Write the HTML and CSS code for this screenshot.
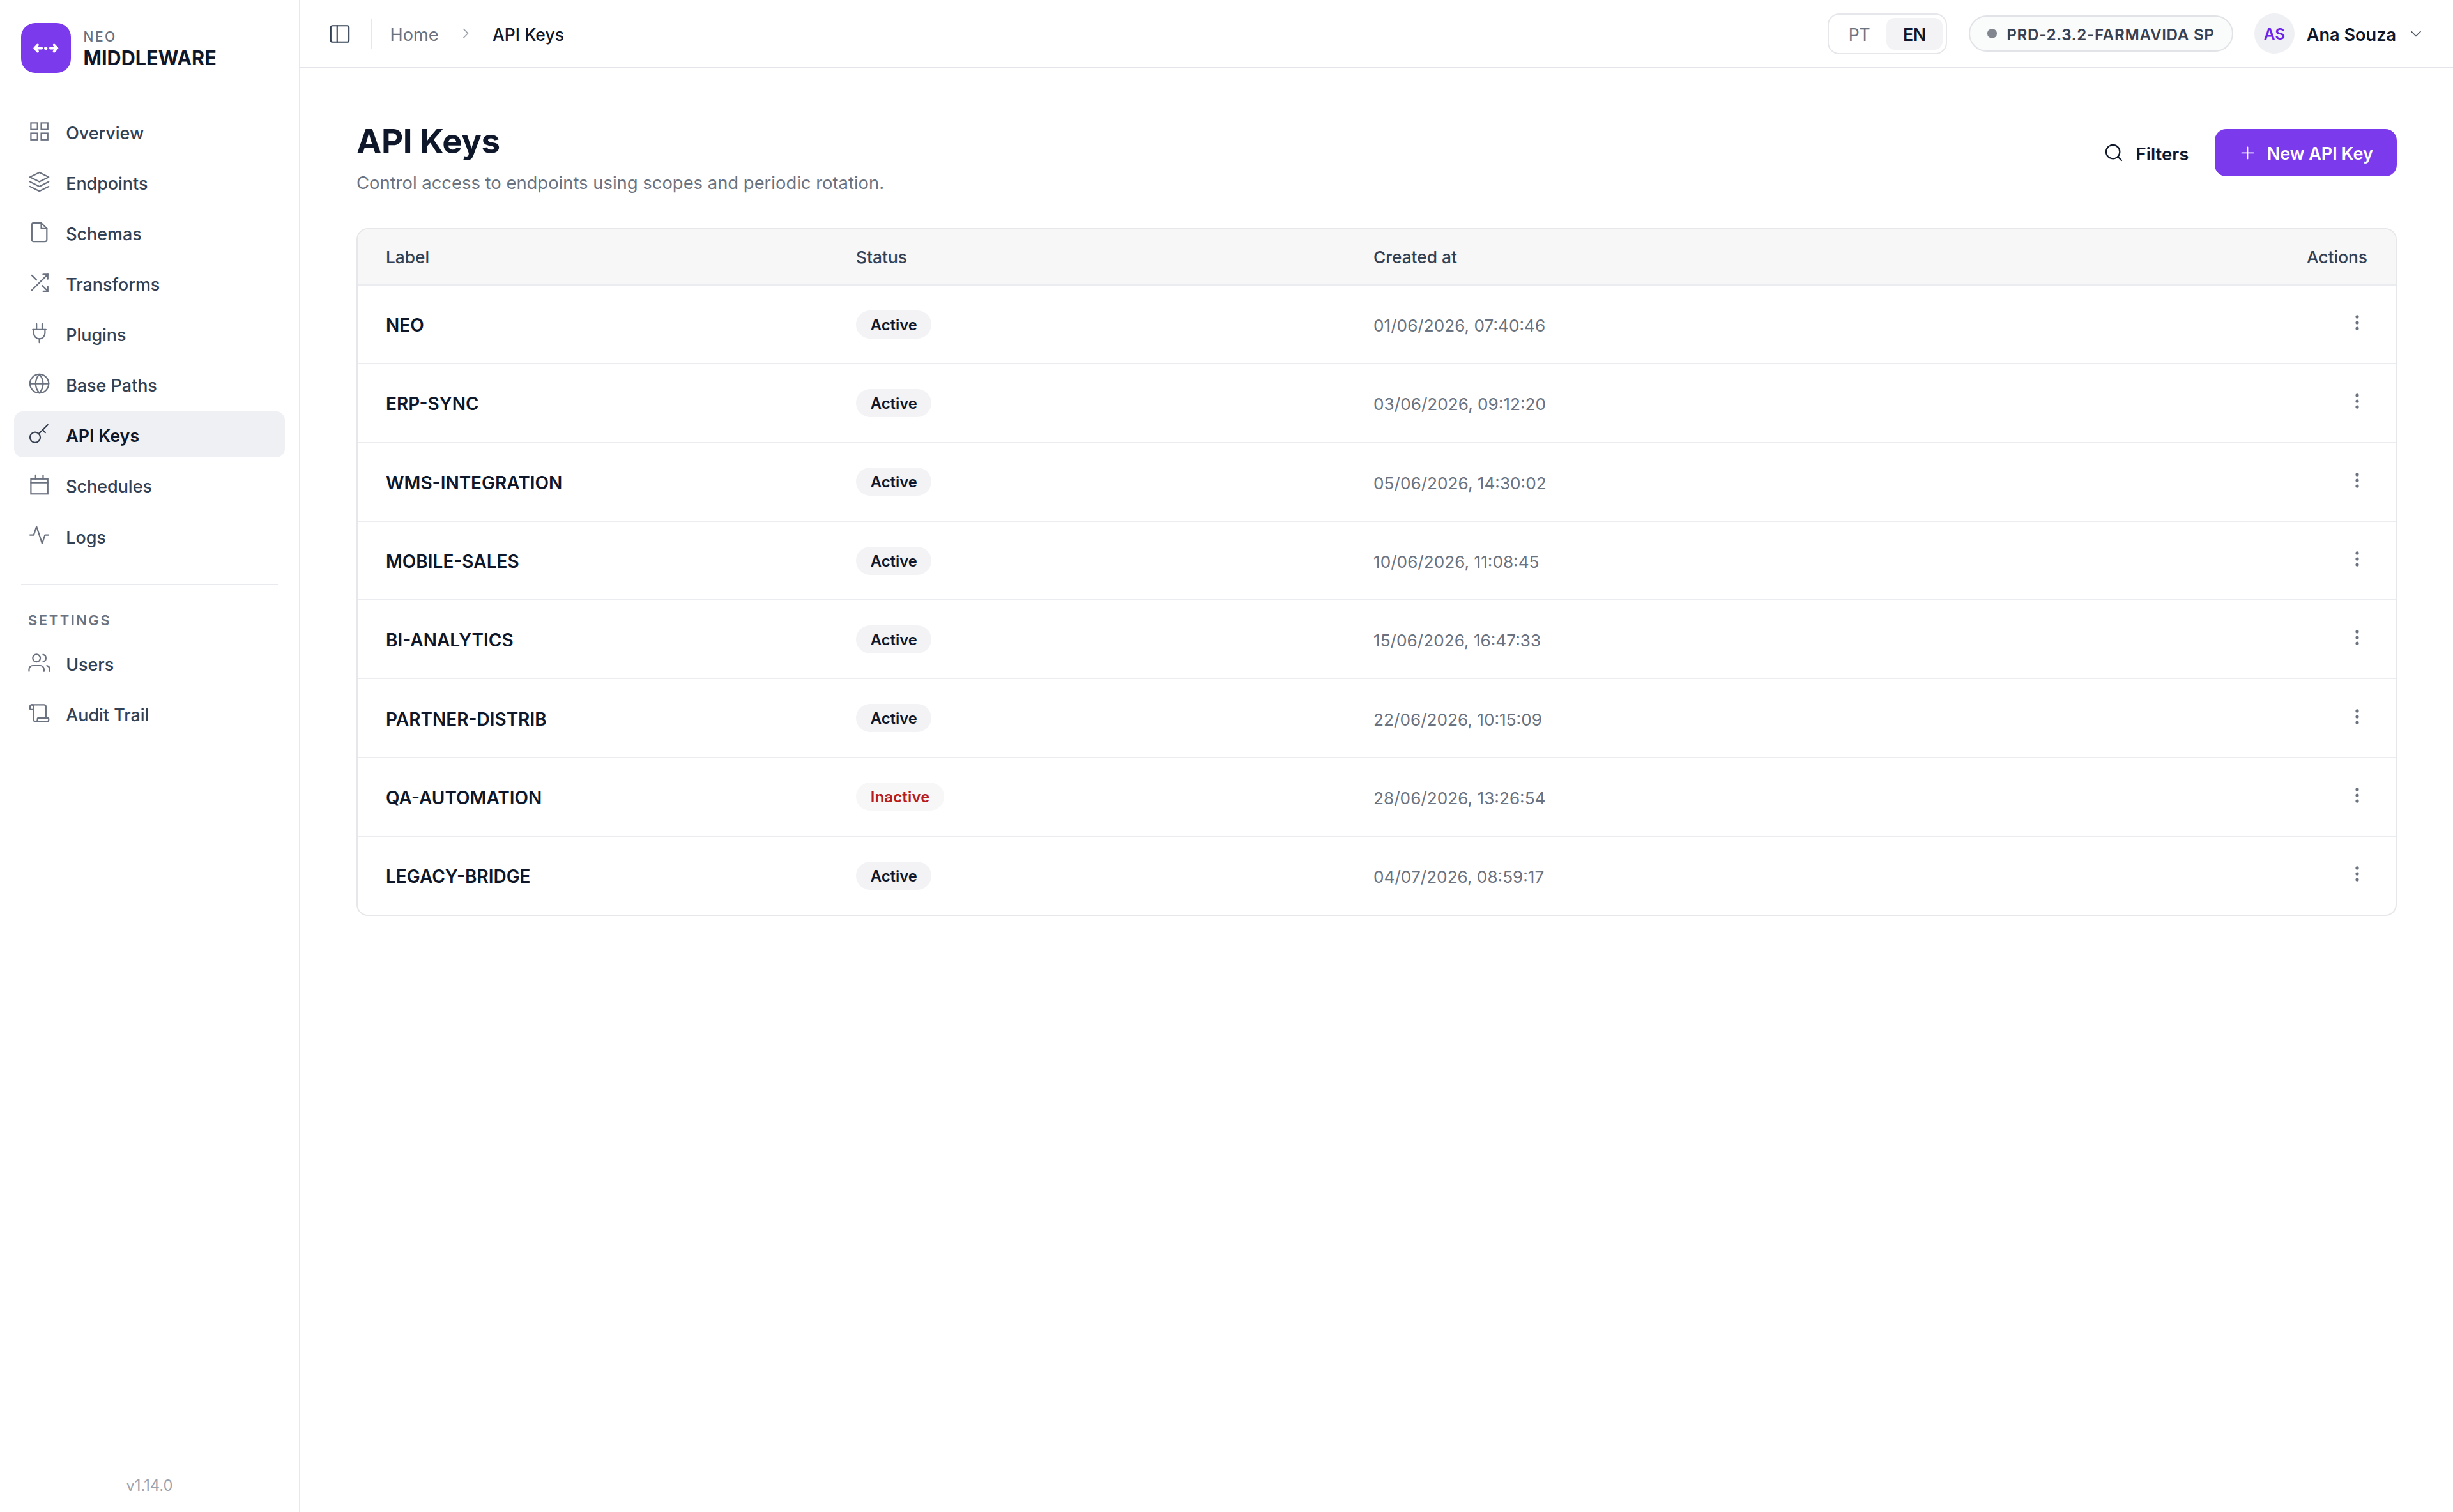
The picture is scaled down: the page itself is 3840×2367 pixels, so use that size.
FILE: index.html
```
<!DOCTYPE html>
<html lang="en">
<head>
    <meta charset="UTF-8">
    <meta name="viewport" content="width=device-width, initial-scale=1.0">
    <title>API Keys - Neo Middleware</title>
    <link rel="stylesheet" href="styles.css">
</head>
<body>
    <!-- Sidebar -->
    <aside class="sidebar">
        <div class="brand">
            <svg class="brand-logo" viewBox="0 0 78 78">
                <path d="M26 34.4l-4.8 5.1 4.8 5.1M21.5 39.5h10.7M45.8 39.5h10.5M51.6 34.4l4.8 5.1-4.8 5.1"/>
                <circle cx="38.7" cy="39.5" r="2.6"/>
            </svg>
            <div class="brand-text">
                <div class="brand-top">NEO</div>
                <div class="brand-name">MIDDLEWARE</div>
            </div>
        </div>

        <nav class="nav">
            <a class="nav-item">
                <svg class="icon sharp" viewBox="0 0 24 24"><rect x="3" y="3" width="7" height="7"/><rect x="14" y="3" width="7" height="7"/><rect x="14" y="14" width="7" height="7"/><rect x="3" y="14" width="7" height="7"/></svg>
                <span>Overview</span>
            </a>
            <a class="nav-item">
                <svg class="icon" viewBox="0 0 24 24"><path d="M12 2L2 7l10 5 10-5-10-5z"/><path d="M2 17l10 5 10-5"/><path d="M2 12l10 5 10-5"/></svg>
                <span>Endpoints</span>
            </a>
            <a class="nav-item">
                <svg class="icon" viewBox="0 0 24 24"><path d="M14 2H6a2 2 0 0 0-2 2v16a2 2 0 0 0 2 2h12a2 2 0 0 0 2-2V8z"/><path d="M14 2v6h6"/></svg>
                <span>Schemas</span>
            </a>
            <a class="nav-item">
                <svg class="icon sharp" viewBox="0 0 24 24"><path d="M16 3h5v5"/><path d="M4 20L21 3"/><path d="M21 16v5h-5"/><path d="M15 15l6 6"/><path d="M4 4l5 5"/></svg>
                <span>Transforms</span>
            </a>
            <a class="nav-item">
                <svg class="icon" viewBox="0 0 24 24"><path d="M9 2v6M15 2v6M12 18v4M5 8h14"/><path d="M6 8v4a6 6 0 0 0 12 0V8"/></svg>
                <span>Plugins</span>
            </a>
            <a class="nav-item">
                <svg class="icon" viewBox="0 0 24 24"><circle cx="12" cy="12" r="10"/><path d="M2 12h20"/><path d="M12 2a15.3 15.3 0 0 1 4 10 15.3 15.3 0 0 1-4 10 15.3 15.3 0 0 1-4-10 15.3 15.3 0 0 1 4-10z"/></svg>
                <span>Base Paths</span>
            </a>
            <a class="nav-item active">
                <svg class="icon" viewBox="0 0 24 24"><circle cx="7.5" cy="15.5" r="5.5"/><path d="M21 2l-9.6 9.6"/><path d="M15.5 7.5l2.8 2.8"/></svg>
                <span>API Keys</span>
            </a>
            <a class="nav-item">
                <svg class="icon sharp" viewBox="0 0 24 24"><rect x="3" y="6" width="18" height="16"/><path d="M3 10h18M8 2v4M16 2v4"/></svg>
                <span>Schedules</span>
            </a>
            <a class="nav-item">
                <svg class="icon" viewBox="0 0 24 24"><path d="M22 12h-4l-3 9L9 3l-3 9H2"/></svg>
                <span>Logs</span>
            </a>
        </nav>

        <div class="separator"></div>
        <div class="nav-title">SETTINGS</div>

        <nav class="nav">
            <a class="nav-item">
                <svg class="icon" viewBox="0 0 24 24"><path d="M17 21v-2a4 4 0 0 0-4-4H5a4 4 0 0 0-4 4v2"/><circle cx="9" cy="7" r="4"/><path d="M23 21v-2a4 4 0 0 0-3-3.87"/><path d="M16 3.13a4 4 0 0 1 0 7.75"/></svg>
                <span>Users</span>
            </a>
            <a class="nav-item">
                <svg class="icon" viewBox="0 0 24 24"><path d="M19 17V5a2 2 0 0 0-2-2H4"/><path d="M8 21h12a2 2 0 0 0 2-2v-1a1 1 0 0 0-1-1H11a1 1 0 0 0-1 1v1a2 2 0 1 1-4 0V5a2 2 0 1 0-4 0v2a1 1 0 0 0 1 1h3"/></svg>
                <span>Audit Trail</span>
            </a>
        </nav>

        <div class="version">v1.14.0</div>
    </aside>

    <div class="content">
        <!-- Top bar -->
        <header class="topbar">
            <svg class="icon panel-icon" viewBox="0 0 24 24"><rect x="2" y="3" width="20" height="18" rx="2"/><path d="M9 3v18"/></svg>
            <div class="topbar-divider"></div>
            <div class="breadcrumb">
                <span class="crumb">Home</span>
                <svg class="icon crumb-icon" viewBox="0 0 24 24"><path d="M9 18l6-6-6-6"/></svg>
                <span class="crumb current">API Keys</span>
            </div>

            <div class="lang">
                <span class="lang-pt">PT</span>
                <span class="lang-en">EN</span>
            </div>
            <div class="env">
                <span class="env-dot"></span>
                <span class="env-name">PRD-2.3.2-FARMAVIDA SP</span>
            </div>
            <div class="user">
                <span class="avatar">AS</span>
                <span class="user-name">Ana Souza</span>
                <svg class="icon user-icon" viewBox="0 0 24 24"><path d="M6 9l6 6 6-6"/></svg>
            </div>
        </header>

        <main>
            <div class="page-head">
                <div>
                    <h1>API Keys</h1>
                    <p>Control access to endpoints using scopes and periodic rotation.</p>
                </div>
                <div class="page-actions">
                    <button class="filters-btn">
                        <svg class="icon" viewBox="0 0 24 24"><circle cx="11" cy="11" r="8"/><path d="M21 21l-4.35-4.35"/></svg>
                        <span>Filters</span>
                    </button>
                    <button class="new-btn">
                        <svg class="icon" viewBox="0 0 24 24"><path d="M12 5v14M5 12h14"/></svg>
                        <span>New API Key</span>
                    </button>
                </div>
            </div>

            <!-- Keys table -->
            <div class="table" id="keys-table">
                <div class="row head">
                    <span>Label</span>
                    <span>Status</span>
                    <span>Created at</span>
                    <span class="right">Actions</span>
                </div>
            </div>
        </main>
    </div>

    <script>
        const keys = [
            { label: 'NEO', active: true, created: '01/06/2026, 07:40:46' },
            { label: 'ERP-SYNC', active: true, created: '03/06/2026, 09:12:20' },
            { label: 'WMS-INTEGRATION', active: true, created: '05/06/2026, 14:30:02' },
            { label: 'MOBILE-SALES', active: true, created: '10/06/2026, 11:08:45' },
            { label: 'BI-ANALYTICS', active: true, created: '15/06/2026, 16:47:33' },
            { label: 'PARTNER-DISTRIB', active: true, created: '22/06/2026, 10:15:09' },
            { label: 'QA-AUTOMATION', active: false, created: '28/06/2026, 13:26:54' },
            { label: 'LEGACY-BRIDGE', active: true, created: '04/07/2026, 08:59:17' }
        ];
        const table = document.getElementById('keys-table');

        keys.forEach(key => {
            const row = document.createElement('div');
            row.classList.add('row');

            row.innerHTML = `
                <span class="label">${key.label}</span>
                <span><span class="badge ${key.active ? '' : 'inactive'}">${key.active ? 'Active' : 'Inactive'}</span></span>
                <span class="date">${key.created}</span>
                <span class="right">
                    <svg class="dots" viewBox="0 0 32 32"><circle cx="16" cy="6.9" r="2.6"/><circle cx="16" cy="16" r="2.6"/><circle cx="16" cy="25.1" r="2.6"/></svg>
                </span>
            `;

            table.appendChild(row);
        });
    </script>
</body>
</html>
```
FILE: styles.css
```
* {
    box-sizing: border-box;
}

body {
    font-family: Inter, sans-serif;
    margin: 0;
    min-height: 100vh;
    display: flex;
    background-color: #fff;
    color: #0f172a;
}

.icon {
    width: 35.2px;
    height: 35.2px;
    flex-shrink: 0;
    fill: none;
    stroke: #6b7280;
    stroke-width: 1.5;
    stroke-linecap: round;
    stroke-linejoin: round;
}

.icon.sharp {
    stroke-linejoin: miter;
}

/* Sidebar */
.sidebar {
    width: 470px;
    flex-shrink: 0;
    padding: 36px 22px 26px;
    border-right: 2px solid #e8e8ec;
    display: flex;
    flex-direction: column;
}

.brand {
    display: flex;
    align-items: center;
    gap: 19.5px;
    margin-left: 11px;
    margin-bottom: 55.3px;
}

.brand-logo {
    width: 78px;
    height: 78px;
    background-color: #7c3aed;
    border-radius: 22px;
    fill: none;
    stroke: #fff;
    stroke-width: 3.8;
    stroke-linecap: round;
    stroke-linejoin: round;
}

.brand-logo circle {
    fill: #fff;
    stroke: none;
}

.brand-text {
    padding-top: 3px;
}

.brand-top {
    font-size: 21px;
    font-weight: 500;
    line-height: 28px;
    letter-spacing: 2.5px;
    color: #6b7280;
}

.brand-name {
    font-size: 30.6px;
    font-weight: 700;
    line-height: 38px;
}

.nav {
    display: flex;
    flex-direction: column;
    gap: 7.1px;
}

.nav-item {
    height: 72px;
    padding: 0 22px;
    display: flex;
    align-items: center;
    gap: 24px;
    border-radius: 14px;
    font-size: 26.9px;
    font-weight: 500;
    color: #334155;
}

.nav-item span {
    padding-top: 5px;
}

.nav-item.active {
    background-color: #eff0f4;
    color: #0f172a;
    font-weight: 600;
}

.nav-item.active .icon {
    stroke: #374151;
}

.separator {
    height: 2px;
    margin: 40.3px 11px 39.7px;
    background-color: #e8eaee;
}

.nav-title {
    font-size: 22px;
    font-weight: 600;
    line-height: 30px;
    letter-spacing: 2.5px;
    color: #6b7280;
    padding-left: 22px;
    margin-bottom: 15.3px;
}

.version {
    margin-top: auto;
    font-size: 23.7px;
    line-height: 30px;
    text-align: center;
    color: #9ca3af;
}

/* Top bar */
.content {
    flex: 1;
}

.topbar {
    height: 107px;
    padding: 0 44.3px 0 45px;
    border-bottom: 2px solid #e4e5ea;
    display: flex;
    align-items: center;
}

.panel-icon {
    width: 34px;
    height: 34px;
    stroke: #334155;
}

.topbar-divider {
    width: 2px;
    height: 48px;
    margin: 0 29px 0 30.5px;
    background-color: #e5e7eb;
}

.breadcrumb {
    display: flex;
    align-items: center;
    gap: 29px;
    margin-right: auto;
}

.crumb {
    font-size: 27.2px;
    color: #6b7280;
    padding-top: 3px;
}

.crumb.current {
    font-size: 26.5px;
    font-weight: 500;
    color: #0f172a;
}

.crumb-icon {
    width: 26.4px;
    height: 26.4px;
    stroke: #9ca3af;
}

.lang {
    display: flex;
    height: 64px;
    padding: 5px;
    border: 2px solid #e5e7eb;
    border-radius: 18px;
    font-size: 26.6px;
    line-height: 52px;
    text-align: center;
}

.lang-pt {
    width: 84.7px;
    color: #6b7280;
}

.lang-en {
    width: 88px;
    background-color: #f3f3f6;
    border-radius: 13px;
    font-weight: 600;
}

.env {
    width: 414px;
    height: 57px;
    margin: 0 33.3px 0 33.7px;
    padding-left: 27.3px;
    display: flex;
    align-items: center;
    gap: 15.6px;
    border: 2px solid #e1e3e7;
    border-radius: 29px;
    background-color: #fafbfb;
}

.env-dot {
    width: 14.7px;
    height: 14.7px;
    border-radius: 50%;
    background-color: #82868f;
}

.env-name {
    font-size: 24.2px;
    font-weight: 600;
    letter-spacing: 0.7px;
    color: #374151;
    padding-top: 3px;
    white-space: nowrap;
}

.user {
    display: flex;
    align-items: center;
}

.avatar {
    width: 63px;
    height: 63px;
    border-radius: 50%;
    background-color: #eff0f4;
    color: #7022ea;
    font-size: 24.4px;
    font-weight: 600;
    line-height: 64px;
    text-align: center;
}

.user-name {
    font-size: 27.1px;
    font-weight: 600;
    padding-top: 3px;
    margin: 0 16.6px 0 18.8px;
}

.user-icon {
    width: 28px;
    height: 28px;
    stroke: #4b5563;
}

/* Page */
main {
    padding: 82px 88px 0;
}

.page-head {
    display: flex;
    justify-content: space-between;
    height: 168px;
}

h1 {
    margin: 0 0 13px;
    font-size: 52.8px;
    font-weight: 700;
    line-height: 64px;
    letter-spacing: -0.5px;
}

.page-head p {
    margin: 0;
    font-size: 27.42px;
    line-height: 40px;
    color: #6b7280;
}

.page-actions {
    display: flex;
    gap: 40px;
    height: 74px;
    margin-top: 13px;
}

.page-actions button {
    display: flex;
    align-items: center;
    padding: 0;
    border: none;
    background: none;
    font-family: inherit;
    font-size: 27px;
    font-weight: 600;
    color: #0f172a;
    cursor: pointer;
}

.page-actions span {
    padding-top: 3px;
}

.page-actions .filters-btn {
    gap: 19px;
    font-size: 27.6px;
}

.filters-btn .icon {
    width: 32px;
    height: 32px;
    stroke: #0f172a;
    stroke-width: 1.7;
}

.page-actions .new-btn {
    width: 285.5px;
    padding-left: 36px;
    gap: 15.4px;
    background-color: #7c3aed;
    border-radius: 18px;
    color: #fff;
}

.new-btn .icon {
    width: 30.8px;
    height: 30.8px;
    stroke: #fff;
}

.new-btn:hover {
    background-color: #6d28d9;
}

/* Table */
.table {
    border: 2px solid #e6e7ea;
    border-radius: 18px;
    overflow: hidden;
}

.row {
    display: grid;
    grid-template-columns: 736px 810px 1fr 200px;
    align-items: center;
    height: 123.3px;
    padding: 0 44px;
    border-bottom: 2px solid #ebecf0;
}

.row:last-child {
    height: 121.6px;
    border-bottom: none;
}

.row.head {
    height: 88px;
    background-color: #f7f7f7;
    font-size: 26.3px;
    font-weight: 500;
    color: #334155;
}

.right {
    text-align: right;
}

.label {
    font-size: 28px;
    font-weight: 600;
    padding-top: 3px;
}

.date {
    font-size: 26.2px;
    color: #6b7280;
    padding-top: 4px;
}

.badge {
    display: inline-block;
    height: 44px;
    line-height: 45px;
    padding: 0 22.7px;
    border-radius: 22px;
    background-color: #f3f3f6;
    font-size: 23.8px;
    font-weight: 600;
    vertical-align: middle;
}

.badge.inactive {
    background-color: #f7f7f7;
    color: #b91c1c;
    letter-spacing: 0.25px;
}

.dots {
    display: inline-block;
    width: 32px;
    height: 32px;
    margin-bottom: 5px;
    fill: #6b7280;
    vertical-align: middle;
}
```
